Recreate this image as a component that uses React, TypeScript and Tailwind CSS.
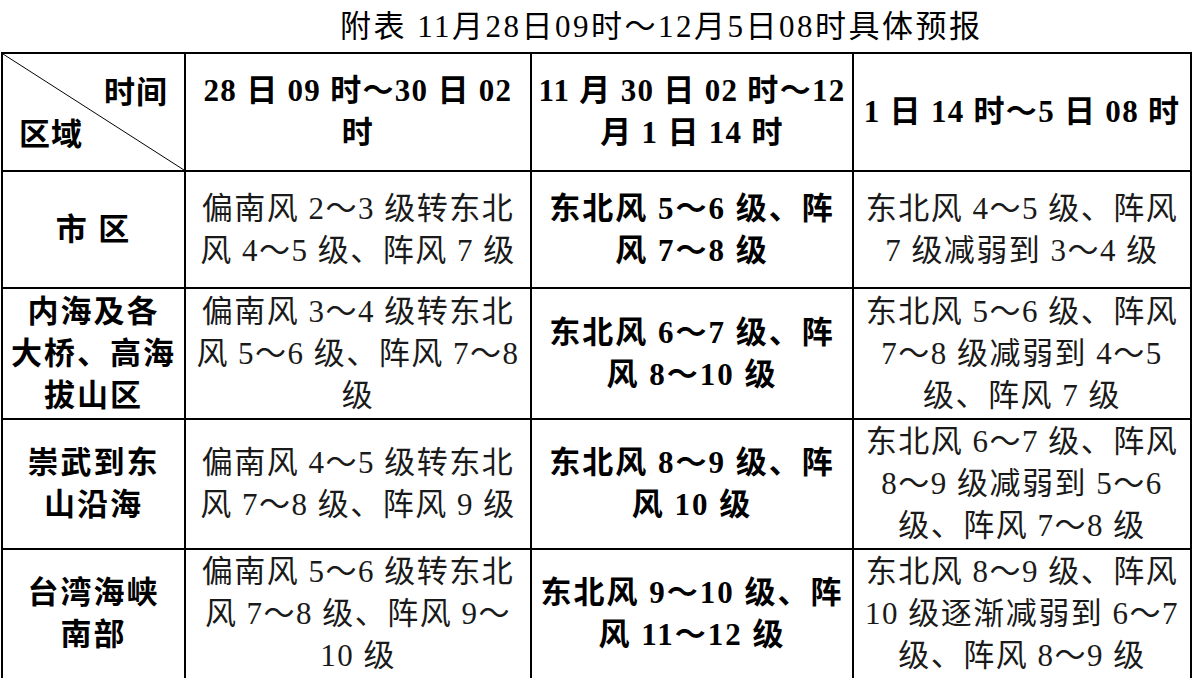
import React from 'react';

type Row = {
    region: string[];
    c1: string[];
    c2: string[];
    c3: string[];
};

const rows: Row[] = [
    {
        region: ['市 区'],
        c1: ['偏南风 2～3 级转东北', '风 4～5 级、阵风 7 级'],
        c2: ['东北风 5～6 级、阵', '风 7～8 级'],
        c3: ['东北风 4～5 级、阵风', '7 级减弱到 3～4 级'],
    },
    {
        region: ['内海及各', '大桥、高海', '拔山区'],
        c1: ['偏南风 3～4 级转东北', '风 5～6 级、阵风 7～8', '级'],
        c2: ['东北风 6～7 级、阵', '风 8～10 级'],
        c3: ['东北风 5～6 级、阵风', '7～8 级减弱到 4～5', '级、阵风 7 级'],
    },
    {
        region: ['崇武到东', '山沿海'],
        c1: ['偏南风 4～5 级转东北', '风 7～8 级、阵风 9 级'],
        c2: ['东北风 8～9 级、阵', '风 10 级'],
        c3: ['东北风 6～7 级、阵风', '8～9 级减弱到 5～6', '级、阵风 7～8 级'],
    },
    {
        region: ['台湾海峡', '南部'],
        c1: ['偏南风 5～6 级转东北', '风 7～8 级、阵风 9～', '10 级'],
        c2: ['东北风 9～10 级、阵', '风 11～12 级'],
        c3: ['东北风 8～9 级、阵风', '10 级逐渐减弱到 6～7', '级、阵风 8～9 级'],
    },
];

const rowHeights = ['h-[117px]', 'h-[131px]', 'h-[130px]', 'h-[130px]'];

const Lines: React.FC<{ lines: string[] }> = ({ lines }) => (
    <>
        {lines.map((l, i) => (
            <div key={i} className="whitespace-nowrap">
                {l}
            </div>
        ))}
    </>
);

export default function App() {
    return (
        <div className="w-[1193px] h-[678px] bg-white text-black font-['Liberation_Serif','Noto_Sans_CJK_SC',serif] overflow-hidden">
            {/* Title */}
            <div className="h-[52px] pl-[340px] flex items-center text-[31px] tracking-[2.5px] leading-none font-normal whitespace-nowrap">
                附表 11月28日09时～12月5日08时具体预报
            </div>

            <table className="ml-px border-collapse table-fixed w-[1189px] text-[31px] leading-[42px]">
                <colgroup>
                    <col className="w-[183px]" />
                    <col className="w-[346px]" />
                    <col className="w-[322px]" />
                    <col className="w-[338px]" />
                </colgroup>
                <tbody>
                    {/* Header */}
                    <tr className="h-[116px]">
                        <td className="relative border-2 border-black p-0 align-top font-bold">
                            <svg className="absolute inset-0 w-full h-full" viewBox="0 0 100 100" preserveAspectRatio="none">
                                <line x1="0" y1="0" x2="100" y2="100" stroke="#000" strokeWidth="1" vectorEffect="non-scaling-stroke" />
                            </svg>
                            <div className="flex flex-col h-[116px] px-[16px] py-[18px] tracking-[1px]">
                                <div className="self-end">时间</div>
                                <div className="self-start">区域</div>
                            </div>
                        </td>
                        <td className="border-2 border-black text-center font-bold tracking-[1.3px]">
                            <Lines lines={['28 日 09 时～30 日 02', '时']} />
                        </td>
                        <td className="border-2 border-black text-center font-bold tracking-[1.3px]">
                            <Lines lines={['11 月 30 日 02 时～12', '月 1 日 14 时']} />
                        </td>
                        <td className="border-2 border-black text-center font-bold tracking-[1.3px]">
                            <Lines lines={['1 日 14 时～5 日 08 时']} />
                        </td>
                    </tr>

                    {rows.map((r, i) => (
                        <tr key={i} className={rowHeights[i]}>
                            <td className="border-2 border-black text-center font-bold tracking-[2px]">
                                <Lines lines={r.region} />
                            </td>
                            <td className="border-2 border-black text-center font-normal text-[#1a1a1a] tracking-[1.5px]">
                                <Lines lines={r.c1} />
                            </td>
                            <td className="border-2 border-black text-center font-bold tracking-[2px]">
                                <Lines lines={r.c2} />
                            </td>
                            <td className="border-2 border-black text-center font-normal text-[#1a1a1a] tracking-[1.5px]">
                                <Lines lines={r.c3} />
                            </td>
                        </tr>
                    ))}
                </tbody>
            </table>
        </div>
    );
}
